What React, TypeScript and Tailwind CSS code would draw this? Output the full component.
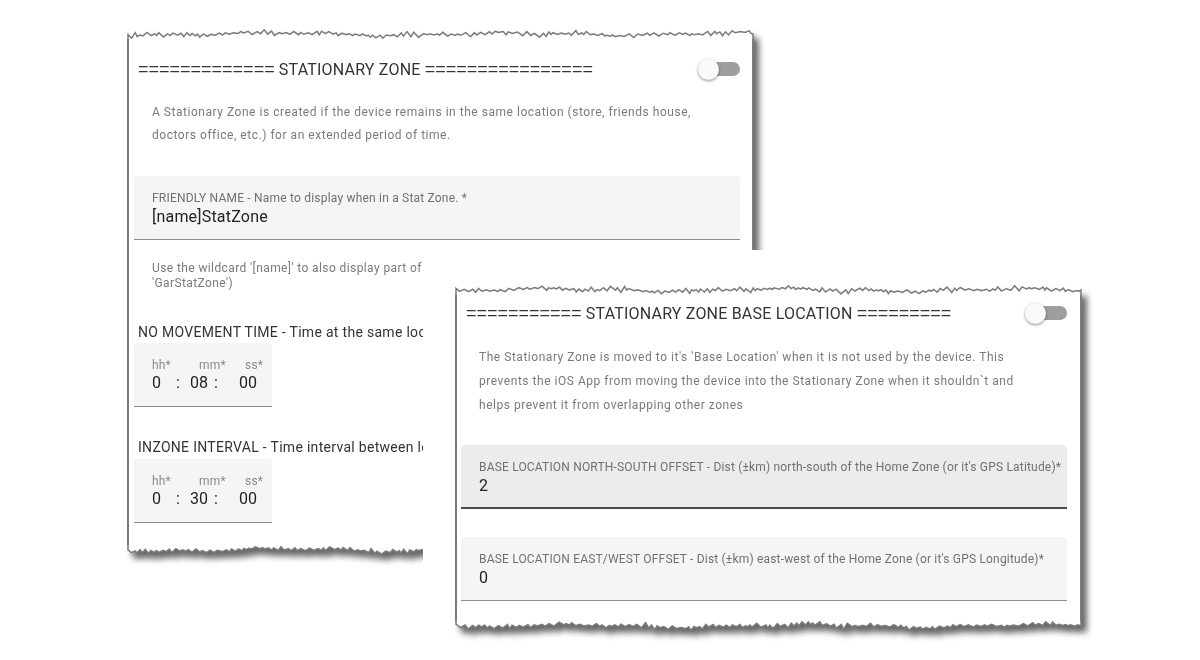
import React from "react";

function rng(seed: number) {
  let s = seed;
  return () => {
    s = (s * 1103515245 + 12345) % 2147483648;
    return s / 2147483648;
  };
}

function jagPath(width: number, h: number, seed: number, top: boolean) {
  const r = rng(seed);
  const base = top ? h : 0;
  let d = `M1,${base} `;
  let x = 1;
  let up = true;
  while (x < width - 1) {
    const wave = Math.sin(x / 37 + seed) * 1.2 + Math.sin(x / 13 + seed * 2) * 0.8;
    const amp = 0.4 + r() * r() * 3.2;
    const mid = h / 2;
    let y = mid + wave + (up ? -amp : amp);
    if (y < 0.8) y = 0.8;
    if (y > h - 0.8) y = h - 0.8;
    d += `L${x.toFixed(1)},${y.toFixed(1)} `;
    up = !up;
    x += 1.8 + r() * 3.4;
  }
  d += `L${width - 1},${(h / 2).toFixed(1)} L${width - 1},${base}`;
  return d;
}

function Edge({ width, seed, top }: { width: number; seed: number; top: boolean }) {
  const h = 10;
  return (
    <svg width={width} height={h} className="block">
      <path d={jagPath(width, h, seed, top)} fill="#ffffff" stroke="#7b7b7b" strokeWidth={1.5} strokeLinejoin="miter" />
    </svg>
  );
}

function Toggle() {
  return (
    <div className="relative w-[42px] h-[22px] shrink-0">
      <div className="absolute left-[5px] right-0 top-[4px] h-[14px] rounded-full bg-[#9e9e9e]" />
      <div className="absolute left-0 top-[1px] w-[21px] h-[21px] rounded-full bg-[#fafafa] shadow-[0_1px_3px_rgba(0,0,0,0.45)]" />
    </div>
  );
}

function Eq({ n }: { n: number }) {
  return <span className="font-['Liberation_Sans',sans-serif] text-[18px] tracking-normal">{"=".repeat(n)}</span>;
}

function TimeBox({ mm }: { mm: string }) {
  return (
    <div className="w-[138px] h-[64px] bg-[#f5f5f5] rounded-t-[4px] border-b border-[#8c8c8c] pl-[18px] pt-[14px]">
      <div className="flex text-[12px] leading-[16px] text-[#8a8a8a] tracking-[0.2px]">
        <span className="w-[47px]">hh*</span>
        <span className="w-[46px]">mm*</span>
        <span>ss*</span>
      </div>
      <div className="flex text-[16px] leading-[20px] text-[#222]">
        <span className="w-[24px]">0</span>
        <span className="w-[14px]">:</span>
        <span className="w-[24px]">{mm}</span>
        <span className="w-[25px]">:</span>
        <span>00</span>
      </div>
    </div>
  );
}

export default function App() {
  return (
    <div className="relative w-[1200px] h-[660px] bg-white overflow-hidden font-['Roboto','Liberation_Sans',sans-serif]">
      {/* Card 1 */}
      <div className="absolute left-[127px] top-[29px] w-[627px] [filter:drop-shadow(5px_6px_3px_rgba(0,0,0,0.6))]">
        <Edge width={627} seed={7} top={true} />
        <div className="bg-white border-x-2 border-[#7b7b7b] pl-[5px] pr-[12px] pt-[19px] pb-[22px]">
          <div className="flex items-center justify-between h-[22px]">
            <div className="pl-[4px] text-[16px] leading-[22px] text-[#333] whitespace-nowrap tracking-[0.2px]">
              <Eq n={13} /> STATIONARY ZONE <Eq n={16} />
            </div>
            <Toggle />
          </div>
          <div className="mt-[21px] pl-[18px] text-[12px] leading-[23px] tracking-[0.53px] text-[#7a7a7a]">
            <div className="whitespace-nowrap">A Stationary Zone is created if the device remains in the same location (store, friends house,</div>
            <div className="whitespace-nowrap">doctors office, etc.) for an extended period of time.</div>
          </div>
          <div className="mt-[29px] h-[64px] bg-[#f5f5f5] rounded-t-[4px] border-b border-[#8c8c8c] pl-[18px] pt-[14px]">
            <div className="text-[12px] leading-[16px] text-[#707070] tracking-[0.2px] whitespace-nowrap">FRIENDLY NAME - Name to display when in a Stat Zone. *</div>
            <div className="text-[16px] leading-[20px] text-[#222] tracking-[0.2px] mt-[1px]">[name]StatZone</div>
          </div>
          <div className="mt-[21px] pl-[18px] text-[12px] leading-[15px] tracking-[0.4px] text-[#7a7a7a] whitespace-nowrap">
            <div>Use the wildcard '[name]' to also display part of the Device's Name in the Stat Zone name (e.g.,</div>
            <div>'GarStatZone')</div>
          </div>
          <div className="mt-[31px] pl-[4px] text-[14px] leading-[20px] tracking-[0.3px] text-[#333] whitespace-nowrap">
            NO MOVEMENT TIME - Time at the same location before a Stationary Zone is created
          </div>
          <div className="mt-[1px]">
            <TimeBox mm="08" />
          </div>
          <div className="mt-[30px] pl-[4px] text-[14px] leading-[20px] tracking-[0.3px] text-[#333] whitespace-nowrap">
            INZONE INTERVAL - Time interval between location requests when in a Stationary Zone
          </div>
          <div className="mt-[2px]">
            <TimeBox mm="30" />
          </div>
        </div>
        <Edge width={627} seed={13} top={false} />
      </div>

      {/* Card 2 with its white margin */}
      <div className="absolute left-[423px] top-[250px] w-[777px] h-[410px] bg-white">
        <div className="absolute left-[32px] top-[35px] w-[627px] [filter:drop-shadow(5px_6px_3px_rgba(0,0,0,0.6))]">
          <Edge width={627} seed={21} top={true} />
          <div className="bg-white border-x-2 border-[#7b7b7b] pl-[4px] pr-[13px] pt-[7px] pb-[20px]">
            <div className="flex items-center justify-between h-[22px]">
              <div className="pl-[5px] text-[16px] leading-[22px] text-[#333] whitespace-nowrap tracking-[0.2px]">
                <Eq n={11} /> STATIONARY ZONE BASE LOCATION <Eq n={9} />
              </div>
              <Toggle />
            </div>
            <div className="mt-[21px] pl-[18px] text-[12px] leading-[24px] tracking-[0.53px] text-[#7a7a7a]">
              <div className="whitespace-nowrap">The Stationary Zone is moved to it's 'Base Location' when it is not used by the device. This</div>
              <div className="whitespace-nowrap">prevents the iOS App from moving the device into the Stationary Zone when it shouldn`t and</div>
              <div className="whitespace-nowrap">helps prevent it from overlapping other zones</div>
            </div>
            <div className="mt-[28px] h-[64px] bg-[#ececec] rounded-t-[4px] border-b-2 border-[#4a4a4a] pl-[18px] pt-[14px]">
              <div className="text-[12px] leading-[16px] text-[#707070] tracking-[0.18px] whitespace-nowrap">BASE LOCATION NORTH-SOUTH OFFSET - Dist (±km) north-south of the Home Zone (or it's GPS Latitude)*</div>
              <div className="text-[16px] leading-[20px] text-[#222] mt-[1px]">2</div>
            </div>
            <div className="mt-[28px] h-[64px] bg-[#f5f5f5] rounded-t-[4px] border-b border-[#8c8c8c] pl-[18px] pt-[14px]">
              <div className="text-[12px] leading-[16px] text-[#707070] tracking-[0.18px] whitespace-nowrap">BASE LOCATION EAST/WEST OFFSET - Dist (±km) east-west of the Home Zone (or it's GPS Longitude)*</div>
              <div className="text-[16px] leading-[20px] text-[#222] mt-[1px]">0</div>
            </div>
          </div>
          <Edge width={627} seed={33} top={false} />
        </div>
      </div>
    </div>
  );
}
